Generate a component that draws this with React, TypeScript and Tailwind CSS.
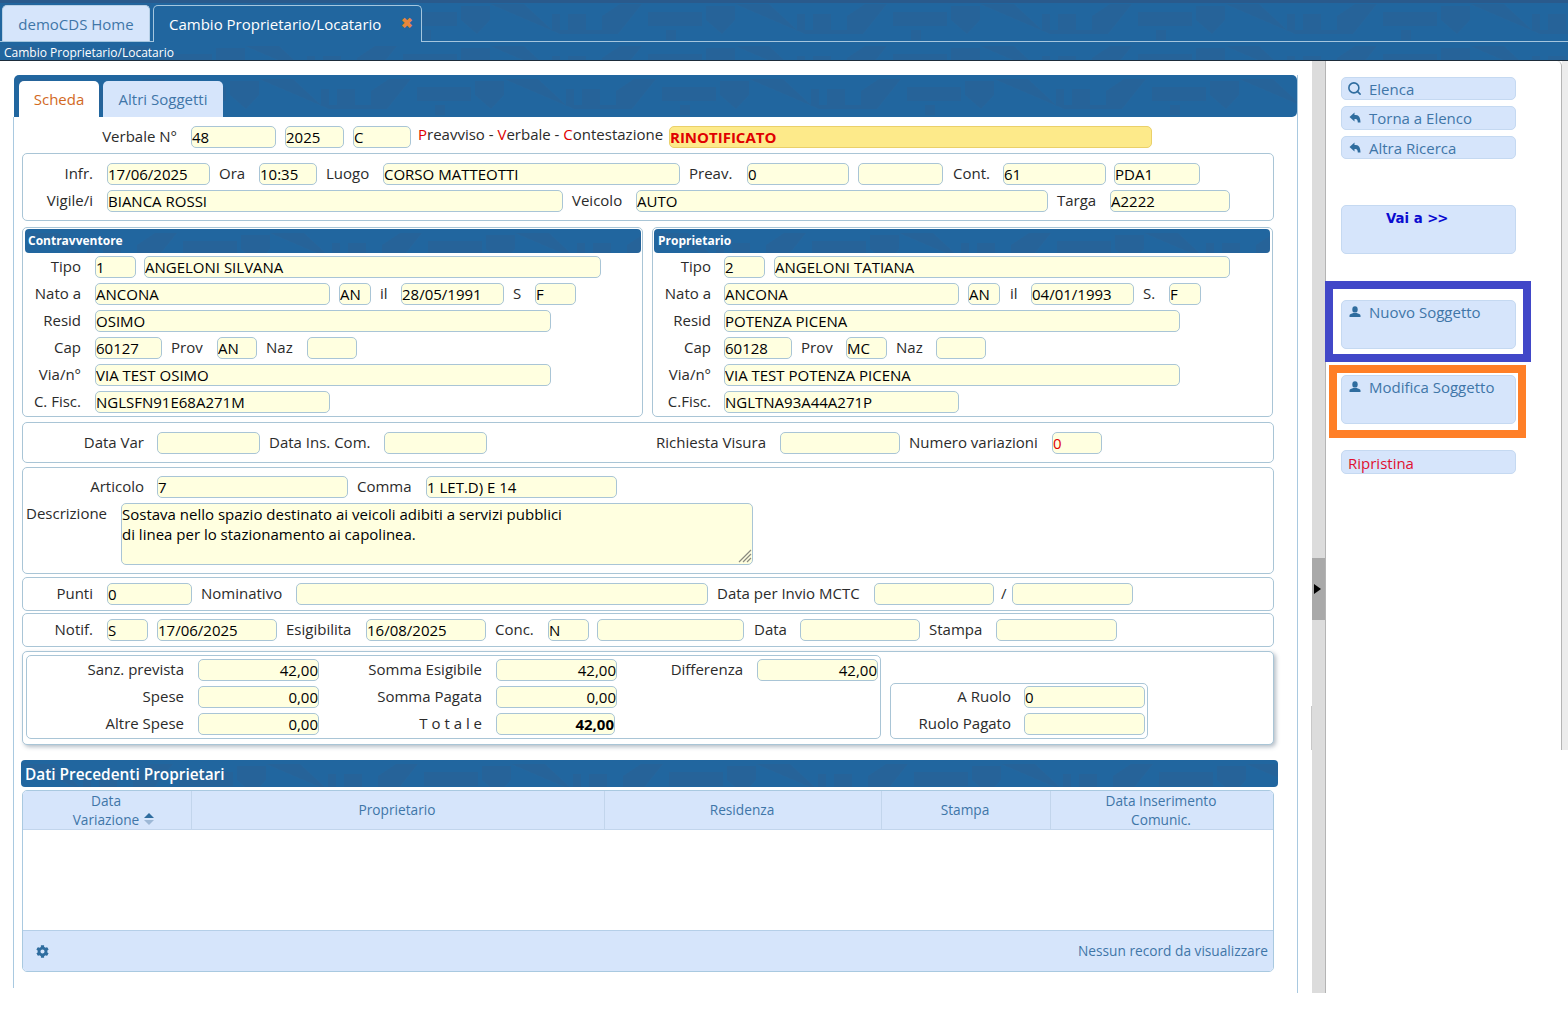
import React from 'react'
import { Search } from 'lucide-react'
import { FaCog } from 'react-icons/fa'

// shared wave texture of the blue bars
const BandBg = () => (
  <svg className="absolute inset-0 w-full h-full" aria-hidden="true">
    <rect width="100%" height="100%" fill="url(#bandwave)" />
  </svg>
)

const Band = ({ c, children }: { c: string; children?: React.ReactNode }) => (
  <div className={`relative overflow-hidden bg-[#21669f] ${c}`}>
    <BandBg />
    <div className="relative h-full">{children}</div>
  </div>
)

const F = ({ c, v, tx = '' }: { c: string; v?: string; tx?: string }) => (
  <input
    readOnly
    defaultValue={v}
    className={`h-[22px] shrink-0 rounded-[5px] border border-[#a9c5d6] bg-[#ffffe0] text-[15px] text-black outline-none ${tx} ${c}`}
  />
)

// label in front of a field: right = text against the field, otherwise a small left gap
const L = ({ c, children }: { c: string; children: React.ReactNode }) => (
  <div className={`shrink-0 whitespace-nowrap pb-[3px] text-[15px] leading-[22px] text-[#2b2b2b] ${c}`}>{children}</div>
)

const Row = ({ c = '', children }: { c?: string; children: React.ReactNode }) => (
  <div className={`flex h-[22px] items-center ${c}`}>{children}</div>
)

const Box = ({ c, children }: { c: string; children: React.ReactNode }) => (
  <div className={`rounded-[5px] border border-[#a9c5d6] bg-white ${c}`}>{children}</div>
)

const PersonIcon = () => (
  <svg viewBox="0 0 12 12" className="h-3 w-3 fill-[#2f6d9f]">
    <ellipse cx="6" cy="3.4" rx="2.7" ry="3.2" />
    <path d="M0.5 11 V9.4 C0.5 8.2 2.8 7.6 4.2 7 H7.8 C9.2 7.6 11.5 8.2 11.5 9.4 V11 Z" />
  </svg>
)

const BackIcon = () => (
  <svg viewBox="0 0 12 12" className="h-3 w-3 fill-[#2f6d9f]">
    <path d="M0.5 5 L5.5 0.5 V3 H7 C10 3 11.5 6 11.5 10.5 H8.8 C8.8 8.2 8 7 6.6 7 H5.5 V9.5 Z" />
  </svg>
)

const SideBtn = ({ c, icon, children }: { c: string; icon: React.ReactNode; children: React.ReactNode }) => (
  <div className={`flex w-[175px] rounded-[5px] border border-[#c5d9f1] bg-[#d6e5fb] text-[15px] text-[#3f76a8] ${c}`}>
    <div className="mr-[2px] flex h-[21px] w-[25px] items-center justify-center">{icon}</div>
    <div className="leading-[23px]">{children}</div>
  </div>
)

const Th = ({ c, children }: { c: string; children: React.ReactNode }) => (
  <div className={`flex flex-col items-center justify-center border-r border-[#c2d5ec] pb-px pr-[2px] text-center text-[13.7px] leading-[19px] text-[#3f76a8] ${c}`}>
    {children}
  </div>
)

const App = () => {
  return (
    <div className="h-[1022px] w-[1568px] overflow-hidden bg-white font-['Open_Sans',sans-serif]">
      <svg width="0" height="0" className="absolute">
        <defs>
          <pattern id="bandwave" width="245" height="42" patternUnits="userSpaceOnUse">
            <g fill="#2d5f91" opacity="0.4">
              <path d="M0 4 H34 L62 30 V14 H70 V30 H78 V14 H96 V30 H112 V16 L130 4 H152 L128 34 H70 Z" />
              <path d="M158 12 H212 V26 H158 Z" />
              <path d="M176 30 H186 V40 H176 Z" />
              <path d="M216 6 H245 V20 L232 34 L216 20 Z" />
            </g>
          </pattern>
        </defs>
      </svg>

      {/* header */}
      <Band c="h-[61px] border-b border-[#1d2c3a]">
        <div className="h-[3px] bg-[#2a5a8c]" />
        <div className="flex h-[39px] border-b border-[#a5c6de] pl-[2px] pt-[2px]">
          <div className="flex h-[36px] w-[148px] items-center justify-center rounded-t-[5px] border border-b-0 border-[#b8d0e6] bg-[#d6e5fb] pt-px text-[15px] text-[#3f76a8]">
            demoCDS Home
          </div>
          <div className="relative ml-[3px] flex h-[37px] w-[269px] items-center rounded-t-[5px] border border-b-0 border-[#a5c6de] bg-[#21669f] pl-[15px] text-[15px] text-white">
            Cambio Proprietario/Locatario
            <span className="absolute left-[247px] top-[8px] text-[14px] font-bold leading-[18px] text-[#e8873a]">✖</span>
          </div>
        </div>
        <div className="pl-[4px] pt-px text-[12px] leading-[20px] text-white">Cambio Proprietario/Locatario</div>
      </Band>

      <div className="relative flex h-[932px]">
        {/* left panel */}
        <div className="w-[1312px] pl-[13px] pt-[14px]">
          <div className="h-[918px] w-[1285px] border-r border-[#a9c9e0]">
            <Band c="ml-px h-[42px] w-[1283px] rounded-[5px] rounded-bl-none">
              <div className="flex h-full items-end pl-[5px]">
                <div className="flex h-[36px] w-[80px] items-center justify-center rounded-t-[5px] bg-white text-[15px] text-[#d2691e]">
                  Scheda
                </div>
                <div className="ml-[4px] flex h-[36px] w-[120px] items-center justify-center rounded-t-[5px] bg-[#d6e5fb] text-[15px] text-[#3f76a8]">
                  Altri Soggetti
                </div>
              </div>
            </Band>
            <div className="flow-root h-[871px] border-l border-[#a9c9e0] pl-[8px]">
              <Row c="mt-[9px]">
                <L c="w-[169px] pr-[14px] text-right">Verbale N°</L>
                <F c="w-[85px]" v="48" />
                <F c="ml-[9px] w-[59px]" v="2025" />
                <F c="ml-[9px] w-[58px]" v="C" />
                <L c="ml-[7px] w-[251px] !pb-[6px]">
                  <span className="text-[#e00000]">P</span>reavviso - <span className="text-[#e00000]">V</span>erbale - <span className="text-[#e00000]">C</span>ontestazione
                </L>
                <F c="w-[483px] !border-[#ead06a] !bg-[#fdea8a]" v="RINOTIFICATO" tx="font-bold !text-[#e00000]" />
              </Row>

              <Box c="mt-[5px] h-[68px] w-[1252px] pt-[9px]">
                <Row>
                  <L c="w-[84px] pr-[14px] text-right">Infr.</L>
                  <F c="w-[103px]" v="17/06/2025" />
                  <L c="w-[49px] pl-[9px]">Ora</L>
                  <F c="w-[58px]" v="10:35" />
                  <L c="w-[66px] pl-[9px]">Luogo</L>
                  <F c="w-[297px]" v="CORSO MATTEOTTI" />
                  <L c="w-[67px] pl-[9px]">Preav.</L>
                  <F c="w-[102px]" v="0" />
                  <F c="ml-[9px] w-[85px]" />
                  <L c="w-[60px] pl-[10px]">Cont.</L>
                  <F c="w-[103px]" v="61" />
                  <F c="ml-[8px] w-[86px]" v="PDA1" />
                </Row>
                <Row c="mt-[5px]">
                  <L c="w-[84px] pr-[14px] text-right">Vigile/i</L>
                  <F c="w-[456px]" v="BIANCA ROSSI" />
                  <L c="w-[73px] pl-[9px]">Veicolo</L>
                  <F c="w-[412px]" v="AUTO" />
                  <L c="w-[62px] pl-[9px]">Targa</L>
                  <F c="w-[120px]" v="A2222" />
                </Row>
              </Box>

              <div className="mt-[6px] flex gap-[9px]">
                <Box c="h-[190px] w-[621px]">
                  <Band c="ml-[2px] mt-px h-[24px] w-[616px] rounded-[4px]">
                    <div className="pl-[3px] text-[12px] font-bold leading-[24px] text-white">Contravventore</div>
                  </Band>
                  <Row c="mt-[3px]">
                    <L c="w-[72px] pr-[14px] text-right">Tipo</L>
                    <F c="w-[41px]" v="1" />
                    <F c="ml-[8px] w-[457px]" v="ANGELONI SILVANA" />
                  </Row>
                  <Row c="mt-[5px]">
                    <L c="w-[72px] pr-[14px] text-right">Nato a</L>
                    <F c="w-[235px]" v="ANCONA" />
                    <F c="ml-[9px] w-[32px]" v="AN" />
                    <L c="w-[30px] pl-[9px]">il</L>
                    <F c="w-[103px]" v="28/05/1991" />
                    <L c="w-[31px] pl-[9px]">S</L>
                    <F c="w-[41px]" v="F" />
                  </Row>
                  <Row c="mt-[5px]">
                    <L c="w-[72px] pr-[14px] text-right">Resid</L>
                    <F c="w-[456px]" v="OSIMO" />
                  </Row>
                  <Row c="mt-[5px]">
                    <L c="w-[72px] pr-[14px] text-right">Cap</L>
                    <F c="w-[67px]" v="60127" />
                    <L c="w-[55px] pl-[9px]">Prov</L>
                    <F c="w-[40px]" v="AN" />
                    <L c="w-[50px] pl-[9px]">Naz</L>
                    <F c="w-[50px]" />
                  </Row>
                  <Row c="mt-[5px]">
                    <L c="w-[72px] pr-[14px] text-right">Via/n°</L>
                    <F c="w-[456px]" v="VIA TEST OSIMO" />
                  </Row>
                  <Row c="mt-[5px]">
                    <L c="w-[72px] pr-[14px] text-right">C. Fisc.</L>
                    <F c="w-[235px]" v="NGLSFN91E68A271M" />
                  </Row>
                </Box>

                <Box c="h-[190px] w-[621px]">
                  <Band c="ml-px mt-px h-[24px] w-[616px] rounded-[4px]">
                    <div className="pl-[4px] text-[12px] font-bold leading-[24px] text-white">Proprietario</div>
                  </Band>
                  <Row c="mt-[3px]">
                    <L c="w-[71px] pr-[13px] text-right">Tipo</L>
                    <F c="w-[41px]" v="2" />
                    <F c="ml-[9px] w-[456px]" v="ANGELONI TATIANA" />
                  </Row>
                  <Row c="mt-[5px]">
                    <L c="w-[71px] pr-[13px] text-right">Nato a</L>
                    <F c="w-[235px]" v="ANCONA" />
                    <F c="ml-[9px] w-[32px]" v="AN" />
                    <L c="w-[31px] pl-[10px]">il</L>
                    <F c="w-[103px]" v="04/01/1993" />
                    <L c="w-[35px] pl-[9px]">S.</L>
                    <F c="w-[32px]" v="F" />
                  </Row>
                  <Row c="mt-[5px]">
                    <L c="w-[71px] pr-[13px] text-right">Resid</L>
                    <F c="w-[456px]" v="POTENZA PICENA" />
                  </Row>
                  <Row c="mt-[5px]">
                    <L c="w-[71px] pr-[13px] text-right">Cap</L>
                    <F c="w-[68px]" v="60128" />
                    <L c="w-[54px] pl-[9px]">Prov</L>
                    <F c="w-[41px]" v="MC" />
                    <L c="w-[49px] pl-[9px]">Naz</L>
                    <F c="w-[50px]" />
                  </Row>
                  <Row c="mt-[5px]">
                    <L c="w-[71px] pr-[13px] text-right">Via/n°</L>
                    <F c="w-[456px]" v="VIA TEST POTENZA PICENA" />
                  </Row>
                  <Row c="mt-[5px]">
                    <L c="w-[71px] pr-[13px] text-right">C.Fisc.</L>
                    <F c="w-[235px]" v="NGLTNA93A44A271P" />
                  </Row>
                </Box>
              </div>

              <Box c="mt-[5px] h-[41px] w-[1252px] pt-[9px]">
                <Row>
                  <L c="w-[134px] pr-[13px] text-right">Data Var</L>
                  <F c="w-[103px]" />
                  <L c="w-[124px] pl-[9px]">Data Ins. Com.</L>
                  <F c="w-[103px]" />
                  <L c="w-[293px] pr-[14px] text-right">Richiesta Visura</L>
                  <F c="w-[120px]" />
                  <L c="w-[152px] pl-[9px]">Numero variazioni</L>
                  <F c="w-[50px]" v="0" tx="!text-[#e00000]" />
                </Row>
              </Box>

              <Box c="mt-[4px] h-[107px] w-[1252px] pt-[8px]">
                <Row>
                  <L c="w-[134px] pr-[13px] text-right">Articolo</L>
                  <F c="w-[191px]" v="7" />
                  <L c="w-[78px] pl-[9px]">Comma</L>
                  <F c="w-[191px]" v="1 LET.D) E 14" />
                </Row>
                <div className="mt-[5px] flex items-start">
                  <L c="w-[98px] pl-[3px] -mt-px">Descrizione</L>
                  <div className="relative h-[62px] w-[632px]">
                    <textarea
                      readOnly
                      defaultValue={'Sostava nello spazio destinato ai veicoli adibiti a servizi pubblici\ndi linea per lo stazionamento ai capolinea.'}
                      className="h-[62px] w-[632px] resize-none rounded-[5px] border border-[#a9c5d6] bg-[#ffffe0] text-[15px] leading-[20px] text-black outline-none"
                    />
                    {/* resize grip */}
                    <svg viewBox="0 0 14 14" className="absolute bottom-[2px] right-[1px] h-[14px] w-[14px] stroke-[#8a8a80]">
                      <path d="M1 13 L13 1 M5 13 L13 5 M9 13 L13 9" strokeWidth="1.2" />
                    </svg>
                  </div>
                </div>
              </Box>

              <Box c="mt-[3px] h-[34px] w-[1252px] pt-[5px]">
                <Row>
                  <L c="w-[84px] pr-[14px] text-right">Punti</L>
                  <F c="w-[85px]" v="0" />
                  <L c="w-[104px] pl-[9px]">Nominativo</L>
                  <F c="w-[412px]" />
                  <L c="w-[166px] pl-[9px]">Data per Invio MCTC</L>
                  <F c="w-[120px]" />
                  <L c="w-[18px] pl-[7px]">/</L>
                  <F c="w-[121px]" />
                </Row>
              </Box>

              <Box c="mt-[2px] h-[34px] w-[1252px] pt-[5px]">
                <Row>
                  <L c="w-[84px] pr-[14px] text-right">Notif.</L>
                  <F c="w-[41px]" v="S" />
                  <F c="ml-[9px] w-[120px]" v="17/06/2025" />
                  <L c="w-[89px] pl-[9px]">Esigibilita</L>
                  <F c="w-[120px]" v="16/08/2025" />
                  <L c="w-[62px] pl-[9px]">Conc.</L>
                  <F c="w-[41px]" v="N" />
                  <F c="ml-[8px] w-[147px]" />
                  <L c="w-[56px] pl-[10px]">Data</L>
                  <F c="w-[120px]" />
                  <L c="w-[76px] pl-[9px]">Stampa</L>
                  <F c="w-[121px]" />
                </Row>
              </Box>

              {/* totals */}
              <Box c="mt-[4px] flex h-[94px] w-[1252px] pl-[3px] pt-[3px] shadow-[2px_2px_4px_rgba(90,110,130,0.45)]">
                <Box c="h-[84px] w-[855px] pt-[3px]">
                  <Row>
                    <L c="w-[171px] pr-[14px] text-right">Sanz. prevista</L>
                    <F c="w-[121px]" v="42,00" tx="text-right" />
                    <L c="w-[177px] pr-[14px] text-right">Somma Esigibile</L>
                    <F c="w-[121px]" v="42,00" tx="text-right" />
                    <L c="w-[140px] pr-[14px] text-right">Differenza</L>
                    <F c="w-[121px]" v="42,00" tx="text-right" />
                  </Row>
                  <Row c="mt-[5px]">
                    <L c="w-[171px] pr-[14px] text-right">Spese</L>
                    <F c="w-[121px]" v="0,00" tx="text-right" />
                    <L c="w-[177px] pr-[14px] text-right">Somma Pagata</L>
                    <F c="w-[121px]" v="0,00" tx="text-right" />
                  </Row>
                  <Row c="mt-[5px]">
                    <L c="w-[171px] pr-[14px] text-right">Altre Spese</L>
                    <F c="w-[121px]" v="0,00" tx="text-right" />
                    <L c="w-[177px] pr-[14px] text-right">T o t a l e</L>
                    <F c="w-[119px]" v="42,00" tx="text-right font-bold" />
                  </Row>
                </Box>
                <Box c="ml-[9px] mt-[28px] h-[56px] w-[258px] pt-[2px]">
                  <Row>
                    <L c="w-[133px] pr-[13px] text-right">A Ruolo</L>
                    <F c="w-[121px]" v="0" />
                  </Row>
                  <Row c="mt-[5px]">
                    <L c="w-[133px] pr-[13px] text-right">Ruolo Pagato</L>
                    <F c="w-[121px]" />
                  </Row>
                </Box>
              </Box>

              {/* previous owners */}
              <Band c="-ml-px mt-[15px] h-[27px] w-[1257px] rounded-[4px]">
                <div className="pl-[4px] text-[15.4px] font-semibold leading-[29px] text-white">Dati Precedenti Proprietari</div>
              </Band>
              <div className="mt-[3px] h-[182px] w-[1252px] overflow-hidden rounded-[5px] border border-[#a9c9e0] bg-white">
                <div className="flex h-[39px] border-b border-[#c2d5ec] bg-[#d6e5fb]">
                  <Th c="w-[169px]">
                    <div>Data</div>
                    <div className="flex items-center">
                      Variazione
                      <svg viewBox="0 0 10 12" className="-mr-[15px] ml-[5px] h-3 w-[10px]">
                        <path d="M5 0 L10 5 H0 Z" fill="#2f6d9f" />
                        <path d="M5 12 L10 7 H0 Z" fill="#9db8d6" />
                      </svg>
                    </div>
                  </Th>
                  <Th c="w-[413px]">Proprietario</Th>
                  <Th c="w-[277px]">Residenza</Th>
                  <Th c="w-[169px]">Stampa</Th>
                  <Th c="flex-1 border-r-0">
                    <div>Data Inserimento</div>
                    <div>Comunic.</div>
                  </Th>
                </div>
                <div className="h-[100px]" />
                <div className="flex h-[41px] items-center justify-between border-t border-[#b5cfe8] bg-[#d6e5fb] pl-[13px] pr-[5px]">
                  <FaCog className="h-[13px] w-[13px] text-[#2f6d9f]" />
                  <div className="text-[13.7px] text-[#3f76a8]">Nessun record da visualizzare</div>
                </div>
              </div>
            </div>
          </div>
        </div>

        {/* splitter */}
        <div className="flex h-[932px] w-[14px] flex-col border-r border-[#b4b4b4] bg-[#dcdcdc]">
          <div className="mt-[497px] flex h-[62px] items-center bg-[#a9a9a9] pl-[2px]">
            <div className="h-0 w-0 border-y-[5px] border-l-[7px] border-y-transparent border-l-black" />
          </div>
        </div>

        {/* right panel */}
        <div className="flex h-[689px] items-start">
          <div className="h-[689px] w-[236px] rounded-tr-[5px] border-r border-[#b4b4b4] pl-[15px] pt-[16px]">
            <SideBtn c="h-[23px]" icon={<Search className="-ml-px -mt-px h-[15px] w-[15px] text-[#2f6d9f]" strokeWidth={2.5} />}>Elenca</SideBtn>
            <SideBtn c="mt-[6px] h-[24px]" icon={<BackIcon />}>Torna a Elenco</SideBtn>
            <SideBtn c="mt-[6px] h-[23px]" icon={<BackIcon />}>Altra Ricerca</SideBtn>
            <div className="mt-[46px] h-[49px] w-[175px] rounded-[5px] border border-[#c5d9f1] bg-[#d6e5fb] pl-[44px] font-['DejaVu_Sans',sans-serif] text-[13.3px] font-bold leading-[26px] text-[#0b0bd0]">
              Vai a <span className="tracking-[-1.2px]">&gt;&gt;</span>
            </div>
            <SideBtn c="mt-[46px] h-[49px]" icon={<PersonIcon />}>Nuovo Soggetto</SideBtn>
            <SideBtn c="mt-[26px] h-[49px]" icon={<PersonIcon />}>Modifica Soggetto</SideBtn>
            <div className="mt-[26px] h-[24px] w-[175px] rounded-[5px] border border-[#c5d9f1] bg-[#d6e5fb] pl-[6px] text-[15px] leading-[24px] text-[#e01030]">
              Ripristina
            </div>
          </div>
          <div className="h-[689px] w-[6px] bg-[#ececec]" />
        </div>

        {/* thin remnant of the left panel edge, and the highlight frames drawn over the buttons */}
        <div className="absolute left-[1311px] top-[645px] h-[44px] w-px bg-[#c8c8c8]" />
        <div className="pointer-events-none absolute left-[1325px] top-[220px] h-[81px] w-[206px] border-[8px] border-[#4147c8]" />
        <div className="pointer-events-none absolute left-[1329px] top-[304px] h-[73px] w-[197px] border-[8px] border-[#ff7f27]" />
      </div>
    </div>
  )
}

export default App
